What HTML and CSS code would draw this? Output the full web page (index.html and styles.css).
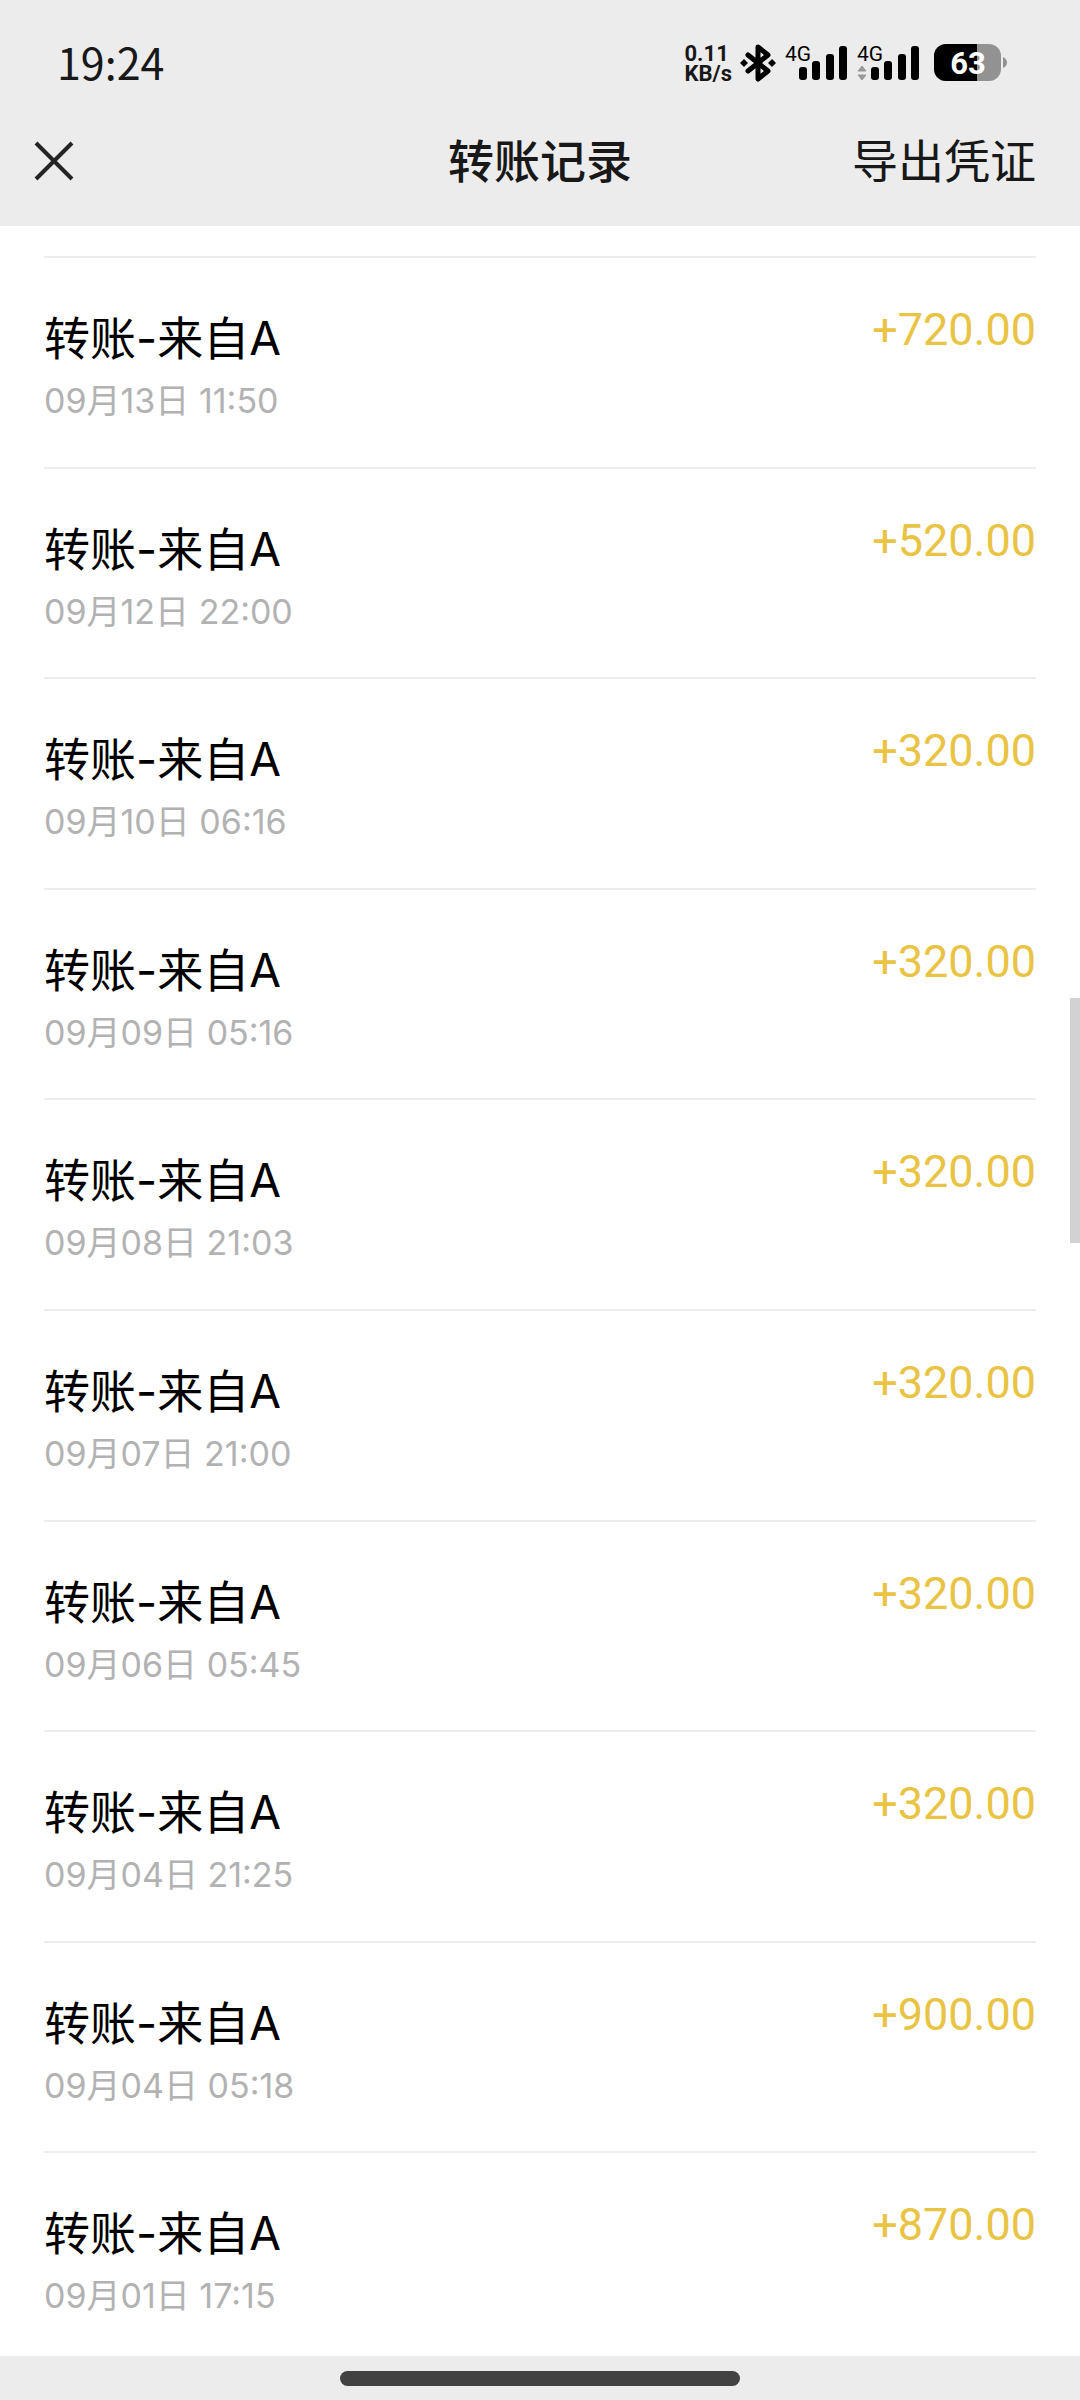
FILE: index.html
```html
<!DOCTYPE html>
<html lang="zh-CN">
<head>
<meta charset="utf-8">
<meta name="viewport" content="width=device-width, initial-scale=1">
<title>转账记录</title>
<link rel="stylesheet" href="styles.css">
</head>
<body>
<div class="page">
  <header class="header">
    <div class="status">
      <time class="clock">19:24</time>
      <div class="indicators">
        <div class="speed"><span>0.11</span><span>KB/s</span></div>
        <svg class="icon" width="36" height="40" viewBox="0 0 36 40" aria-hidden="true">
          <path d="M8 12 28 28 18 36V4L28 12 8 28" fill="none" stroke="#000" stroke-width="5" stroke-linejoin="round" stroke-linecap="round"/>
          <path d="M4 16l4 4-4 4-4-4zM32 16l4 4-4 4-4-4z"/>
        </svg>
        <svg class="icon" width="64" height="40" viewBox="0 0 64 40" aria-hidden="true">
          <text class="network" x="1" y="18">4G</text>
          <rect x="15" y="24" width="8" height="13" rx="3"/>
          <rect x="28" y="18" width="8" height="19" rx="3"/>
          <rect x="42" y="11" width="8" height="26" rx="3"/>
          <rect x="55" y="3" width="8" height="34" rx="3"/>
        </svg>
        <svg class="icon" width="64" height="40" viewBox="0 0 64 40" aria-hidden="true">
          <text class="network" x="1" y="18">4G</text>
          <path d="M6 23l4 5H2zM6 37l4-5H2z" fill="#999" stroke="#999" stroke-linejoin="round"/>
          <rect x="15" y="24" width="8" height="13" rx="3"/>
          <rect x="28" y="18" width="8" height="19" rx="3"/>
          <rect x="42" y="11" width="8" height="26" rx="3"/>
          <rect x="55" y="3" width="8" height="34" rx="3"/>
        </svg>
        <svg class="icon" width="80" height="40" viewBox="0 0 80 40" role="img" aria-label="63%">
          <rect x="6" y="1" width="67" height="37" rx="12" fill="#929292"/>
          <path d="M49 1H18A12 12 0 0 0 6 13v13a12 12 0 0 0 12 12h31z"/>
          <path d="M75 14q4 2 4 5.500t-4 5.500z" fill="#929292"/>
          <text class="charge" x="40" y="31" text-anchor="middle">63</text>
        </svg>
      </div>
    </div>
    <div class="titlebar">
      <button class="close" type="button" aria-label="关闭">
        <svg class="icon" width="38" height="38" viewBox="0 0 38 38"><path d="M1 1l36 36M37 1L1 37" stroke="#242424" stroke-width="4"/></svg>
      </button>
      <h1 class="title">转账记录</h1>
      <button class="export" type="button">导出凭证</button>
    </div>
  </header>
  <main class="content">
    <ul class="records">
      <li class="record"><div><p class="name">转账-来自A</p><time class="date">09月13日 11:50</time></div><span class="amount">+720.00</span></li>
      <li class="record"><div><p class="name">转账-来自A</p><time class="date">09月12日 22:00</time></div><span class="amount">+520.00</span></li>
      <li class="record"><div><p class="name">转账-来自A</p><time class="date">09月10日 06:16</time></div><span class="amount">+320.00</span></li>
      <li class="record"><div><p class="name">转账-来自A</p><time class="date">09月09日 05:16</time></div><span class="amount">+320.00</span></li>
      <li class="record"><div><p class="name">转账-来自A</p><time class="date">09月08日 21:03</time></div><span class="amount">+320.00</span></li>
      <li class="record"><div><p class="name">转账-来自A</p><time class="date">09月07日 21:00</time></div><span class="amount">+320.00</span></li>
      <li class="record"><div><p class="name">转账-来自A</p><time class="date">09月06日 05:45</time></div><span class="amount">+320.00</span></li>
      <li class="record"><div><p class="name">转账-来自A</p><time class="date">09月04日 21:25</time></div><span class="amount">+320.00</span></li>
      <li class="record"><div><p class="name">转账-来自A</p><time class="date">09月04日 05:18</time></div><span class="amount">+900.00</span></li>
      <li class="record"><div><p class="name">转账-来自A</p><time class="date">09月01日 17:15</time></div><span class="amount">+870.00</span></li>
    </ul>
    <div class="scroll-thumb"></div>
  </main>
  <footer class="nav"><div class="handle"></div></footer>
</div>
</body>
</html>
```
FILE: styles.css
```css
* { box-sizing: border-box; }

body {
  margin: 0;
  background: #fff;
  color: #000;
  font-family: Inter, "Noto Sans CJK SC", sans-serif;
}

button {
  padding: 0;
  border: 0;
  background: none;
  color: inherit;
  font: inherit;
}

.page {
  display: flex;
  flex-direction: column;
  min-height: 100vh;
}

.icon {
  display: block;
  flex: none;
  overflow: visible;
}

.header {
  flex: none;
  background: #ececec;
  color: #181818;
}

.status {
  display: flex;
  align-items: center;
  justify-content: space-between;
  height: 126px;
  padding: 0 72px 0 57px;
}

.clock {
  padding-bottom: 4px;
  font: 400 43px/60px "Noto Sans CJK SC", sans-serif;
}

.indicators {
  display: flex;
  align-items: center;
  gap: 8px;
}

.speed {
  display: flex;
  flex-direction: column;
  padding-top: 2px;
  font: 700 22px/20px Roboto, sans-serif;
}

.network { font: 400 21px Roboto, sans-serif; }

.charge {
  fill: #fff;
  font: 700 31px Roboto, sans-serif;
}

.titlebar {
  display: grid;
  grid-template-columns: 1fr auto 1fr;
  align-items: center;
  height: 100px;
  padding: 0 35px 30px;
}

.close { justify-self: start; }

.title {
  margin: 0;
  font-size: 46px;
  font-weight: 500;
  line-height: 60px;
}

.export {
  justify-self: end;
  padding-right: 9px;
  font-size: 46px;
  line-height: 60px;
}

.content {
  position: relative;
  display: flex;
  flex: 1;
  flex-direction: column;
  overflow: hidden;
}

.records {
  display: flex;
  flex: 1;
  flex-direction: column;
  margin: 30px 44px -6px;
  padding: 0;
  list-style: none;
}

.record {
  display: flex;
  flex: 1 0 200px;
  align-items: flex-start;
  justify-content: space-between;
  padding-top: 48px;
  border-top: 2px solid #ededed;
}

.name {
  margin: 0;
  font-size: 46px;
  line-height: 64px;
}

.date {
  display: block;
  color: #b2b2b2;
  font-size: 34px;
  line-height: 62px;
}

.amount {
  color: #e9c444;
  font: 400 45px/48px Roboto, sans-serif;
}

.scroll-thumb {
  position: absolute;
  top: 772px;
  right: 0;
  width: 10px;
  height: 245px;
  background: #d2d2d2;
}

.nav {
  display: flex;
  flex: none;
  align-items: center;
  justify-content: center;
  height: 44px;
  background: #ececec;
}

.handle {
  width: 37%;
  height: 15px;
  border-radius: 8px;
  background: #424242;
}
```
